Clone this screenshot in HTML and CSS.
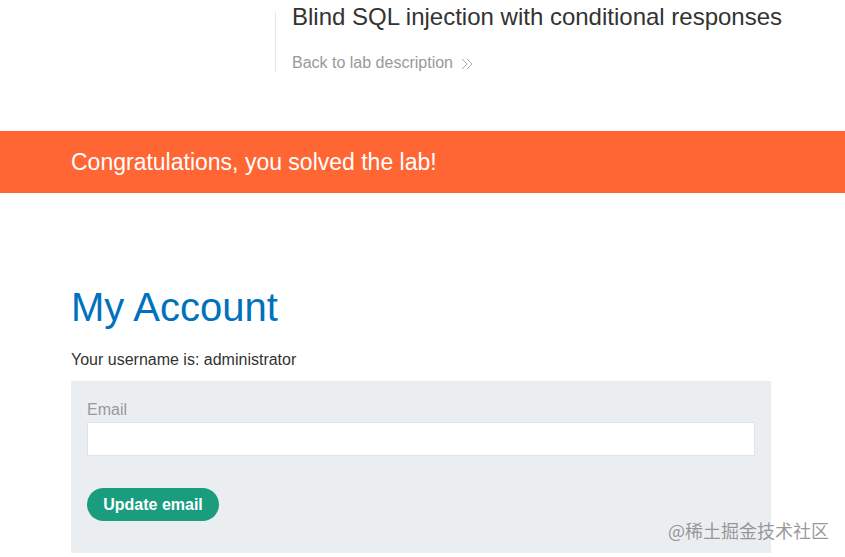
FILE: index.html
```html
<!DOCTYPE html>
<html>
<head>
<meta charset="utf-8">
<link rel="stylesheet" href="styles.css">
</head>
<body>
<div class="top">
  <div class="title-block">
    <h2 class="lab-title">Blind SQL injection with conditional responses</h2>
    <a class="back-link" href="#">Back to lab description <svg class="chev" width="14" height="14" viewBox="0 0 14 14"><path d="M2 2 L7 7 L2 12 M7 2 L12 7 L7 12" fill="none" stroke="#aaa" stroke-width="1"/></svg></a>
  </div>
</div>
<div class="banner">
  <p class="banner-text">Congratulations, you solved the lab!</p>
</div>
<div class="content">
  <h1 class="page-title">My Account</h1>
  <p class="username">Your username is: administrator</p>
  <form class="email-form">
    <label class="email-label">Email</label>
    <input class="email-input" type="email">
    <button class="update-btn" type="button">Update email</button>
  </form>
</div>
<div class="watermark">@稀土掘金技术社区</div>
</body>
</html>
```
FILE: styles.css
```css
html, body {
  margin: 0;
  padding: 0;
  background: #fff;
  font-family: "Liberation Sans", Arial, sans-serif;
  color: #333332;
}
.top {
  height: 131px;
  padding-left: 275px;
  padding-top: 12px;
  box-sizing: border-box;
}
.title-block {
  border-left: 1px solid #e6e6e6;
  padding-left: 16px;
  height: 60px;
}
.lab-title {
  margin: 0;
  font-size: 24px;
  font-weight: normal;
  line-height: 26px;
  position: relative;
  top: -8px;
  color: #333332;
}
.back-link {
  display: inline-flex;
  align-items: center;
  gap: 7px;
  margin-top: 16px;
  font-size: 16px;
  color: #999;
  text-decoration: none;
}
.chev { margin-top: 1px; }
.banner {
  background: #ff6633;
  height: 62px;
  display: flex;
  align-items: center;
  padding-left: 71px;
}
.banner-text {
  margin: 0;
  color: #fff;
  font-size: 23px;
}
.content {
  padding-left: 71px;
  padding-top: 90px;
}
.page-title {
  margin: 0;
  font-size: 40px;
  font-weight: normal;
  color: #0071bc;
  line-height: 48px;
}
.username {
  margin: 19px 0 0;
  font-size: 16px;
  line-height: 20px;
}
.email-form {
  margin-top: 11px;
  width: 700px;
  height: 172px;
  box-sizing: border-box;
  background: #ebeef1;
  padding: 20px 16px 0;
  display: flex;
  flex-direction: column;
  align-items: flex-start;
}
.email-label {
  font-size: 16px;
  color: #999;
  line-height: 18px;
}
.email-input {
  margin-top: 3px;
  width: 668px;
  height: 34px;
  box-sizing: border-box;
  border: 1px solid #e3e3e3;
  background: #fff;
  padding: 0 8px;
}
.update-btn {
  margin-top: 32px;
  width: 132px;
  height: 33px;
  border: none;
  border-radius: 17px;
  background: #1a9c7e;
  color: #fff;
  font-family: "Liberation Sans", Arial, sans-serif;
  font-weight: bold;
  font-size: 16px;
  padding: 0;
}
.watermark {
  position: absolute;
  left: 668px;
  top: 517px;
  font-family: "Noto Sans CJK SC", sans-serif;
  font-size: 18px;
  color: rgba(120,120,120,0.75);
}
```
